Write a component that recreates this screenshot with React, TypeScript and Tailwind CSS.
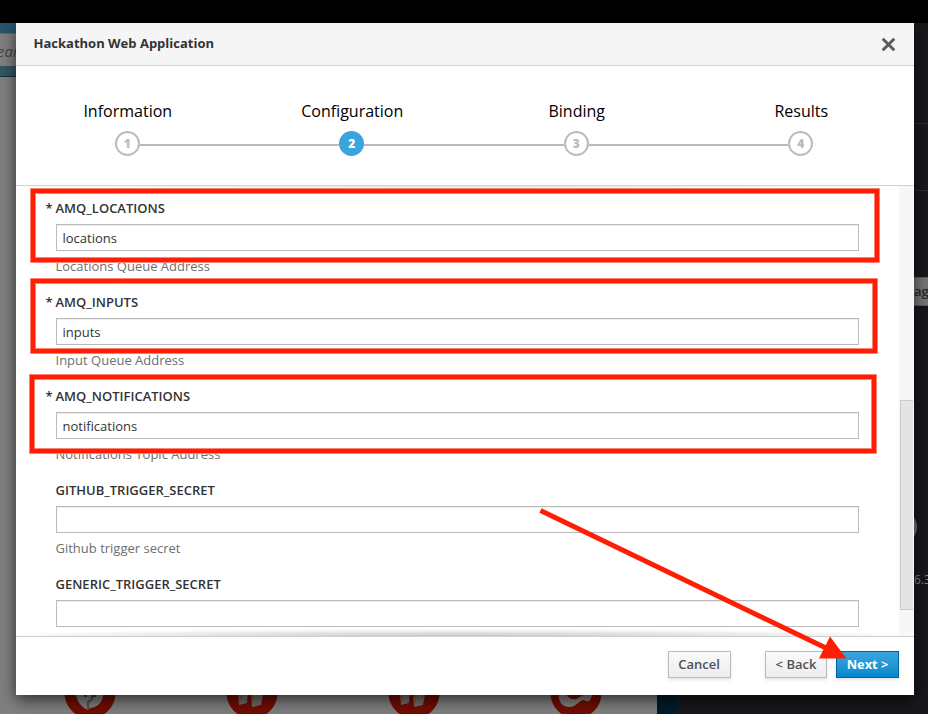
import React from "react";

type Field = { name: string; value: string; help?: string; required?: boolean };

const fields: Field[] = [
  { name: "AMQ_LOCATIONS", value: "locations", help: "Locations Queue Address", required: true },
  { name: "AMQ_INPUTS", value: "inputs", help: "Input Queue Address", required: true },
  { name: "AMQ_NOTIFICATIONS", value: "notifications", help: "Notifications Topic Address", required: true },
  { name: "GITHUB_TRIGGER_SECRET", value: "", help: "Github trigger secret" },
  { name: "GENERIC_TRIGGER_SECRET", value: "" },
];

const steps = ["Information", "Configuration", "Binding", "Results"];

function Backdrop() {
  return (
    <div className="flex h-[714px] flex-col bg-black">
      <div className="h-[23px] shrink-0" />
      <div className="flex min-h-0 flex-1">
        <div className="flex w-[657px] flex-col bg-[#808080]">
          <div className="h-[10px] bg-[#26566c]" />
          <div className="h-[33px] border-t border-[#666] bg-[#808080] text-[15px] leading-[34px] text-[#444] italic">
            <span className="-ml-[3px]">ear</span>
          </div>
          <div className="h-[11px] border-b border-[#122f3c] bg-[#365563]" />
          <div className="mt-auto h-[37px] overflow-hidden">
            <CatalogIcons />
          </div>
        </div>
        <div className="w-5 bg-[#001c29]" />
        <div className="flex flex-1 flex-col items-end bg-[#16181c] text-[#888]">
          <div className="h-[101px] w-[14px] border-b border-[#292b2f]" />
          <div className="h-[67px] w-[14px] border-b border-[#292b2f]" />
          <div className="mt-[86px] h-[29px] w-[14px] overflow-hidden border-y border-[#5c5c5c] bg-[#777] text-[13px] leading-[27px] font-semibold text-[#27292c]">
            ag
          </div>
          <div className="mt-[204px] flex h-[34px] w-[14px] items-center overflow-hidden">
            <div className="-ml-[31px] size-[34px] shrink-0 rounded-full bg-[#777]" />
          </div>
          <div className="mt-[26px] w-[14px] text-[12px] leading-[20px]">6.3</div>
        </div>
      </div>
    </div>
  );
}

function CatalogIcons() {
  return (
    <svg width="657" height="37" viewBox="0 677 657 37">
      <g fill="#730d02">
        <circle cx="90" cy="693" r="25.5" />
        <circle cx="252" cy="693" r="25.5" />
        <circle cx="414" cy="693" r="25.5" />
        <circle cx="576" cy="693" r="25.5" />
      </g>
      <path d="M76 690Q75 704 88 710L90 708Q103 707 104 690Z" fill="#808080" />
      <path d="M93 695v5l-4 3v7l-2-1v-8l4-2v-4Z" fill="#5d4a48" />
      <path d="M84 696h3M92 696h4" stroke="#222" strokeWidth="1.5" />
      {[0, 162].map((dx) => (
        <g key={dx} transform={`translate(${dx} 0)`}>
          <path d="M238 690h10l-1 13-8 2Z" fill="#73706f" />
          <path d="M251 690h13l-3 15-9 2Z" fill="#73706f" />
          <path d="M238 690l1 15 3-8ZM251 690l1 17 2-10Z" fill="#934f49" />
        </g>
      ))}
      <path
        d="M559 691Q557 706 569 707C577 707 579 700 584 700C588 703 592 701 592 692H586C583 697 580 696 577 699C570 700 567 697 565 691Z"
        fill="#858281"
      />
    </svg>
  );
}

function Steps() {
  return (
    <div className="h-[120px] border-b border-[#d1d1d1] pt-[34px]">
      <ol className="-ml-px grid w-[898px] grid-cols-4">
        {steps.map((s, i) => (
          <li key={s} className="flex flex-col items-center">
            <span className="pl-px text-[16px] leading-[22px] text-black">{s}</span>
            <div className="mt-[9px] flex w-full items-center">
              <div className={`mt-[2px] h-[2px] flex-1 ${i > 0 ? "bg-[#bbb]" : ""}`} />
              <div
                className={`flex size-[25px] items-center justify-center rounded-full border-2 text-[12px] font-extrabold ${
                  i === 1 ? "border-[#39a5dc] bg-[#39a5dc] text-white" : "border-[#bbb] bg-white text-[#bbb]"
                }`}
              >
                {i + 1}
              </div>
              <div className={`mt-[2px] h-[2px] flex-1 ${i < 3 ? "bg-[#bbb]" : ""}`} />
            </div>
          </li>
        ))}
      </ol>
    </div>
  );
}

function FormField({ name, value, help, required }: Field) {
  return (
    <div className="h-[94px] shrink-0">
      <div className="-ml-[0.5px] flex h-[26px] text-[13px] leading-[20px] font-semibold text-[#333]">
        <span className="-ml-[10px] w-[10px]">{required ? "*" : ""}</span>
        <label>{name}</label>
      </div>
      <input
        readOnly
        value={value}
        className="block h-[27px] w-[803px] border border-[#bbb] bg-white px-[5.5px] text-[13px] text-[#333] shadow-[inset_0_1px_1px_rgba(0,0,0,0.075)] outline-none"
      />
      {help && <p className="mt-[5px] -ml-[0.5px] text-[13px] leading-[20px] text-[#6e6e6e]">{help}</p>}
    </div>
  );
}

function Annotations() {
  return (
    <svg className="pointer-events-none absolute inset-0" width="928" height="714" viewBox="0 0 928 714">
      <g fill="none" stroke="#ff9a8d" strokeWidth="6">
        <rect x="33" y="191" width="844" height="69" />
        <rect x="33" y="281" width="842" height="70" />
        <rect x="32" y="377" width="842" height="74" />
      </g>
      <g fill="none" stroke="#ff1e05" strokeWidth="4.4">
        <rect x="33" y="191" width="844" height="69" />
        <rect x="33" y="281" width="842" height="70" />
        <rect x="32" y="377" width="842" height="74" />
      </g>
      <path d="M540.500 510.500L827 648.500" stroke="#ff1e05" strokeWidth="5" />
      <path d="M830 636.500L846.500 658.500L819 658.500Z" fill="#ff1e05" />
    </svg>
  );
}

export default function App() {
  return (
    <div className="relative h-[714px] w-[928px] overflow-hidden font-['Open_Sans',sans-serif]">
      <Backdrop />
      <div className="absolute top-[23px] left-4 flex h-[672px] w-[898px] flex-col bg-white shadow-[0_5px_15px_rgba(0,0,0,0.65)]">
        <header className="flex h-[43px] shrink-0 items-center justify-between border-b border-[#d1d1d1] bg-[#f5f5f5] pr-[18px] pl-[17.5px]">
          <h1 className="text-[13px] font-bold text-[#333]">Hackathon Web Application</h1>
          <svg width="15" height="15" viewBox="0 0 15 15" className="mt-[1px]">
            <path d="M1.700 1.700L13.300 13.300M13.300 1.700L1.700 13.300" stroke="#5c5c5c" strokeWidth="3" />
          </svg>
        </header>
        <Steps />
        <div className="relative flex h-[450px] shrink-0 overflow-hidden">
          <div className="flex w-[883px] flex-col pt-[12px] pl-[40px]">
            {fields.map((f) => (
              <FormField key={f.name} {...f} />
            ))}
          </div>
          <div className="flex w-[15px] flex-col bg-[#f7f7f7] pt-[214px] pl-px">
            <div className="h-[210px] w-[13px] border border-r-0 border-[#c9c9c9] bg-[#e4e4e4]" />
          </div>
          <div className="absolute top-0 left-0 h-[3px] w-[883px] bg-[radial-gradient(ellipse_50%_100%_at_50%_0%,rgba(0,0,0,0.12),transparent)]" />
          <div className="absolute bottom-0 left-0 h-[7px] w-[883px] bg-[radial-gradient(ellipse_55%_100%_at_50%_100%,rgba(0,0,0,0.22),transparent)]" />
        </div>
        <footer className="flex h-[59px] shrink-0 justify-end border-t border-[#d1d1d1] pt-[14px] pr-[15px] text-[13px] font-semibold text-[#4d5258]">
          <button className="mr-[34px] h-[27px] w-[63px] border border-[#bbb] bg-linear-to-b from-[#fafafa] to-[#ededed] pr-px pb-px leading-[24px] shadow-[0_2px_3px_rgba(0,0,0,0.1)]">
            Cancel
          </button>
          <button className="mr-[9px] h-[27px] w-[62px] border border-[#bbb] bg-linear-to-b from-[#fafafa] to-[#ededed] pb-px leading-[24px] shadow-[0_2px_3px_rgba(0,0,0,0.1)]">
            &lt; Back
          </button>
          <button className="h-[27px] w-[63px] border border-[#00659c] bg-linear-to-b from-[#39a5dc] to-[#0088ce] pb-px text-[12.8px] leading-[24px] font-bold text-white shadow-[0_2px_3px_rgba(0,0,0,0.1)]">
            Next &gt;
          </button>
        </footer>
      </div>
      <Annotations />
    </div>
  );
}
